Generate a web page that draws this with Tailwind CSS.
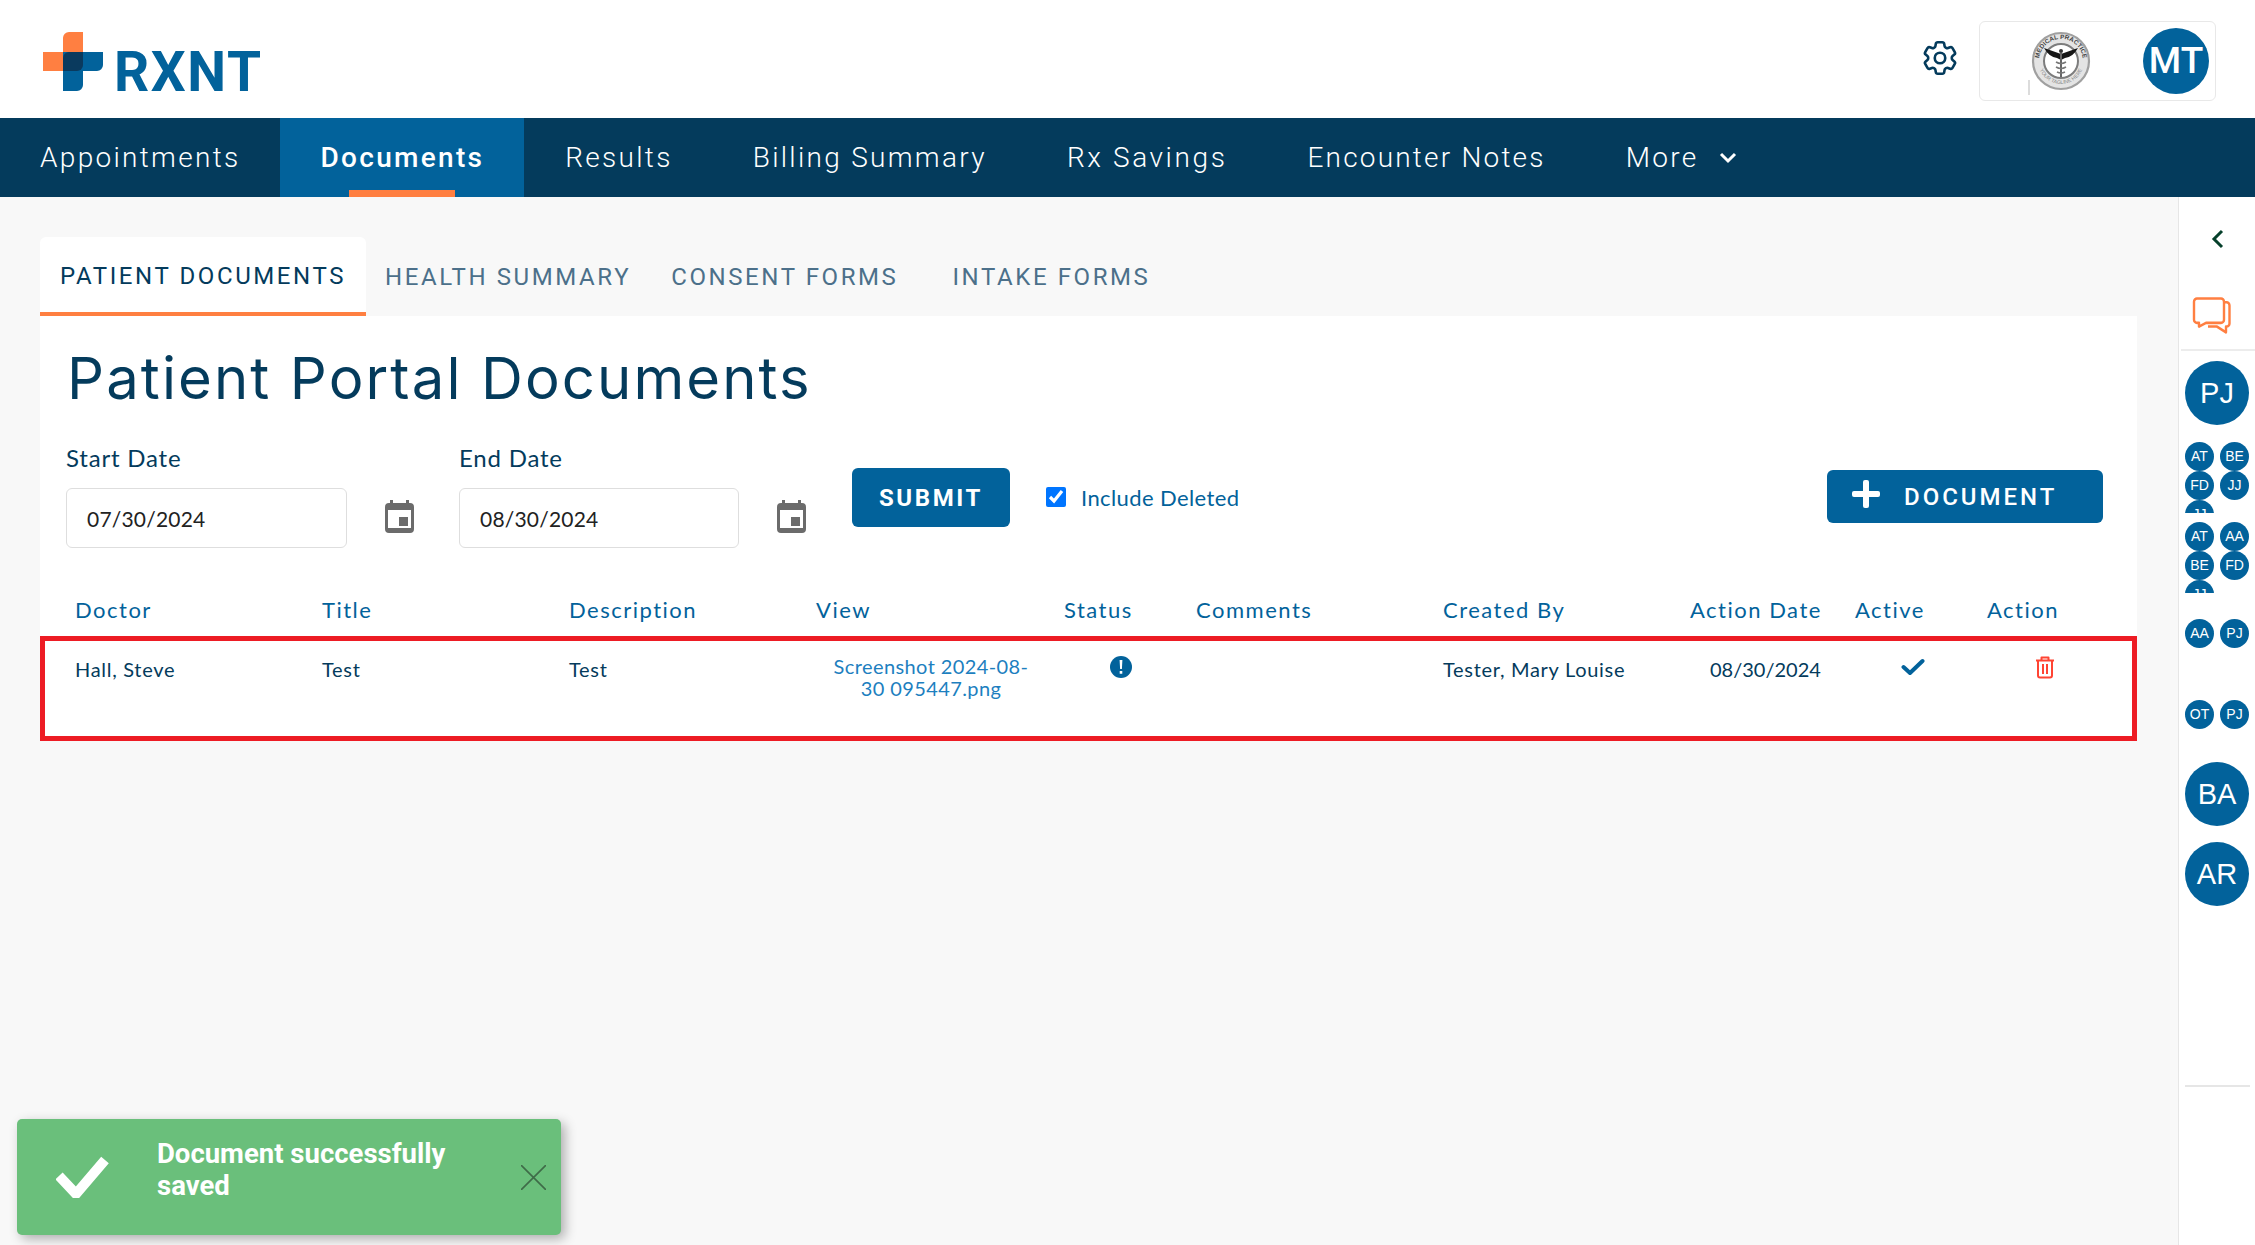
<!DOCTYPE html>
<html lang="en">
<head>
<meta charset="UTF-8">
<title>Documents</title>
<script src="https://cdn.jsdelivr.net/npm/@tailwindcss/browser@4"></script>
</head>
<body class="relative h-[1245px] w-[2255px] overflow-hidden bg-[#f8f8f8] font-['Lato',sans-serif]">

  <!-- top header -->
  <header class="flex h-[118px] items-start justify-between bg-white">
    <div class="ml-[43px] mt-[32px] flex items-start">
      <svg class="h-[59px] w-[60px]" viewBox="0 0 60 59">
        <path d="M20 6a6 6 0 0 1 6-6h14v39H0V20h20z" fill="#ff7f41"/>
        <path d="M20 20h40v13a6 6 0 0 1-6 6H40v14a6 6 0 0 1-6 6H20z" fill="#02629b"/>
        <path d="M20 26a6 6 0 0 1 6-6h14v13a6 6 0 0 1-6 6H20z" fill="#0a3a5e"/>
      </svg>
      <span class="ml-[11px] mt-[11px] font-['Roboto',sans-serif] text-[55px] leading-[59px] font-bold tracking-[1.6px] text-[#02629b]">RXNT</span>
    </div>
    <div class="mr-[39px] mt-[21px] flex items-start">
      <svg class="mr-[18px] mt-[16px] h-[42px] w-[42px]" viewBox="0 0 24 24" fill="none" stroke="#043b5c" stroke-width="1.5" stroke-linejoin="round">
        <path d="M9.594 3.94c.09-.542.56-.94 1.11-.94h2.593c.55 0 1.02.398 1.11.94l.213 1.281c.063.374.313.686.645.87.074.04.147.083.22.127.325.196.72.257 1.075.124l1.217-.456a1.125 1.125 0 0 1 1.37.49l1.296 2.247a1.125 1.125 0 0 1-.26 1.431l-1.003.827c-.293.241-.438.613-.43.992a7.723 7.723 0 0 1 0 .255c-.008.378.137.75.43.991l1.004.827c.424.35.534.955.26 1.43l-1.298 2.247a1.125 1.125 0 0 1-1.369.491l-1.217-.456c-.355-.133-.75-.072-1.076.124a6.47 6.47 0 0 1-.22.128c-.331.183-.581.495-.644.869l-.213 1.281c-.09.543-.56.94-1.11.94h-2.594c-.55 0-1.019-.398-1.11-.94l-.213-1.281c-.062-.374-.312-.686-.644-.87a6.52 6.52 0 0 1-.22-.127c-.325-.196-.72-.257-1.076-.124l-1.217.456a1.125 1.125 0 0 1-1.369-.49l-1.297-2.247a1.125 1.125 0 0 1 .26-1.431l1.004-.827c.292-.24.437-.613.43-.991a6.932 6.932 0 0 1 0-.255c.007-.38-.138-.751-.43-.992l-1.004-.827a1.125 1.125 0 0 1-.26-1.43l1.297-2.247a1.125 1.125 0 0 1 1.37-.491l1.216.456c.356.133.751.072 1.076-.124.072-.044.146-.086.22-.128.332-.183.582-.495.644-.869l.214-1.28Z"/>
        <circle cx="12" cy="12" r="3"/>
      </svg>
      <div class="relative flex h-[80px] w-[237px] items-center justify-between rounded-[6px] border border-[#e8e8e8] bg-white pl-[51px] pr-[6px]">
        <svg class="h-[60px] w-[60px]" viewBox="0 0 60 60">
          <defs>
            <path id="sealtop" d="M8 30a22 22 0 0 1 44 0"/>
            <path id="sealbot" d="M7 30a23 23 0 0 0 46 0"/>
          </defs>
          <circle cx="30" cy="30" r="28" fill="#e4e4e4" stroke="#a0a0a0" stroke-width="2.2"/>
          <circle cx="30" cy="30" r="17" fill="#fff" stroke="#7d7d7d" stroke-width="2"/>
          <text font-family="Liberation Sans, sans-serif" font-size="6.4" font-weight="700" fill="#444" text-anchor="middle"><textPath href="#sealtop" startOffset="50%">MEDICAL PRACTICE</textPath></text>
          <text font-family="Liberation Sans, sans-serif" font-size="5.2" fill="#888" text-anchor="middle"><textPath href="#sealbot" startOffset="50%">YOUR TAGLINE HERE</textPath></text>
          <path d="M30 23 L13 17 Q18 26 26 27 L30 29 L34 27 Q42 26 47 17Z" fill="#161616"/>
          <circle cx="30" cy="20" r="2" fill="#333"/>
          <path d="M29 22h2v24h-2z" fill="#666"/>
          <path d="M25 31q5 3 10 0M25 36q5 3 10 0M26 41q4 2 8 0" fill="none" stroke="#777" stroke-width="1.6"/>
        </svg>
        <div class="flex h-[66px] w-[66px] items-center justify-center rounded-full bg-[#02629b] font-['Roboto',sans-serif] text-[37px] font-medium text-white">MT</div>
        <span class="absolute left-[48px] top-[58px] h-[15px] w-[2px] bg-[#dcdcdc]"></span>
      </div>
    </div>
  </header>

  <!-- main nav -->
  <nav class="flex h-[79px] items-stretch bg-[#043b5c] font-['Roboto',sans-serif] text-[28px] tracking-[2.3px] text-white">
    <a class="flex items-center px-[40px] font-light">Appointments</a>
    <a class="relative flex items-center bg-[#02629b] px-[40px] font-medium">Documents<span class="absolute bottom-0 left-[69px] h-[7px] w-[106px] bg-[#ff7f41]"></span></a>
    <a class="ml-[1px] flex items-center px-[40px] font-light">Results</a>
    <a class="flex items-center px-[40px] font-light">Billing Summary</a>
    <a class="flex items-center px-[40px] font-light tracking-[2.6px]">Rx Savings</a>
    <a class="flex items-center px-[40px] font-light tracking-[2.2px]">Encounter Notes</a>
    <a class="flex items-center gap-[20px] px-[40px] font-light">More
      <svg class="h-[12px] w-[20px]" viewBox="0 0 20 12" fill="none" stroke="#fff" stroke-width="3"><path d="M3 2l7 7 7-7"/></svg>
    </a>
  </nav>

  <div class="flex h-[1048px]">
    <main class="w-[2178px] pl-[40px] pr-[41px] pt-[40px]">
      <!-- sub tabs -->
      <div class="flex h-[79px] font-['Roboto',sans-serif] text-[24px] tracking-[2.6px] text-[#4c708a]">
        <a class="flex w-[326px] items-center justify-center rounded-t-[6px] border-b-[4px] border-[#ff7f41] bg-white pt-[3px] font-normal text-[#043b5c]">PATIENT DOCUMENTS</a>
        <a class="ml-[19px] flex items-center pt-[1px]">HEALTH SUMMARY</a>
        <a class="ml-[40px] flex items-center pt-[1px]">CONSENT FORMS</a>
        <a class="ml-[54px] flex items-center pt-[1px]">INTAKE FORMS</a>
      </div>

      <section class="h-[425px] bg-white">
        <h1 class="pl-[27px] pt-[24px] font-['Inter',sans-serif] text-[58px] leading-[76px] font-normal tracking-[2.1px] text-[#043b5c]">Patient Portal Documents</h1>

        <!-- filters -->
        <div class="relative mt-[26px] flex h-[100px] pl-[26px]">
          <div class="w-[393px]">
            <label class="block text-[24px] leading-[32px] tracking-[0.8px] text-[#043b5c]">Start Date</label>
            <div class="mt-[14px] flex items-center">
              <input class="h-[60px] w-[281px] rounded-[6px] border border-[#dedede] bg-white px-[20px] text-[21px] tracking-[0.2px] text-[#222]" value="07/30/2024">
              <svg class="mb-[3px] ml-[38px] h-[33px] w-[29px]" viewBox="0 0 29 33" fill="#6b6b6b"><path d="M5 0h3v3h13V0h3v3h1a4 4 0 0 1 4 4v22a4 4 0 0 1-4 4H4a4 4 0 0 1-4-4V7a4 4 0 0 1 4-4h1z"/><path d="M3 10h23v18H3z" fill="#fff"/><path d="M14 17h9v9h-9z"/></svg>
            </div>
          </div>
          <div class="w-[393px]">
            <label class="block text-[24px] leading-[32px] tracking-[0.8px] text-[#043b5c]">End Date</label>
            <div class="mt-[14px] flex items-center">
              <input class="h-[60px] w-[280px] rounded-[6px] border border-[#dedede] bg-white px-[20px] text-[21px] tracking-[0.2px] text-[#222]" value="08/30/2024">
              <svg class="mb-[3px] ml-[38px] h-[33px] w-[29px]" viewBox="0 0 29 33" fill="#6b6b6b"><path d="M5 0h3v3h13V0h3v3h1a4 4 0 0 1 4 4v22a4 4 0 0 1-4 4H4a4 4 0 0 1-4-4V7a4 4 0 0 1 4-4h1z"/><path d="M3 10h23v18H3z" fill="#fff"/><path d="M14 17h9v9h-9z"/></svg>
            </div>
          </div>
          <button class="mt-[26px] h-[59px] w-[158px] rounded-[6px] bg-[#02629b] font-['Roboto',sans-serif] text-[24px] font-bold tracking-[2.6px] text-white">SUBMIT</button>
          <label class="ml-[36px] mt-[41px] flex h-[28px] items-center text-[22px] tracking-[0.4px] text-[#02629b]">
            <input type="checkbox" checked class="h-[20px] w-[20px] accent-[#0075ff]">
            <span class="ml-[15px]">Include Deleted</span>
          </label>
          <button class="absolute left-[1787px] top-[28px] flex h-[53px] w-[276px] items-center rounded-[6px] bg-[#02629b] pl-[25px] font-['Roboto',sans-serif] text-[24px] font-medium tracking-[3px] text-white">
            <svg class="mb-[6px] h-[28px] w-[28px]" viewBox="0 0 28 28" fill="#fff"><rect x="11" y="0" width="6" height="28" rx="2"/><rect x="0" y="11" width="28" height="6" rx="2"/></svg>
            <span class="ml-[24px]">DOCUMENT</span>
          </button>
        </div>

        <!-- table -->
        <div class="mt-[43px]">
          <div class="flex h-[51px] items-center pb-[3px] pl-[35px] text-[22px] tracking-[1.5px] text-[#02629b]">
            <span class="w-[247px]">Doctor</span>
            <span class="w-[247px]">Title</span>
            <span class="w-[247px]">Description</span>
            <span class="w-[248px]">View</span>
            <span class="w-[132px]">Status</span>
            <span class="w-[247px]">Comments</span>
            <span class="w-[247px]">Created By</span>
            <span class="w-[165px]">Action Date</span>
            <span class="w-[132px]">Active</span>
            <span>Action</span>
          </div>
          <div class="flex h-[105px] items-start border-[5px] border-[#ed1c24] bg-white pl-[30px] text-[20px] tracking-[0.7px] text-[#043b5c]">
            <span class="mt-[14px] w-[247px] leading-[28px]">Hall, Steve</span>
            <span class="mt-[14px] w-[247px] leading-[28px]">Test</span>
            <span class="mt-[14px] w-[247px] leading-[28px]">Test</span>
            <a class="ml-[10px] mt-[14px] w-[210px] text-center text-[20px] leading-[22px] tracking-[0.4px] text-[#1d7fbf]">Screenshot 2024-08-30 095447.png</a>
            <span class="ml-[28px] w-[132px]">
              <svg class="ml-[46px] mt-[15px] h-[22px] w-[22px]" viewBox="0 0 22 22"><circle cx="11" cy="11" r="11" fill="#02629b"/><path d="M9.6 4h2.8l-.5 9h-1.8zM9.7 15h2.6v2.8H9.7z" fill="#fff"/></svg>
            </span>
            <span class="w-[247px]"></span>
            <span class="mt-[14px] w-[247px] leading-[28px]">Tester, Mary Louise</span>
            <span class="mt-[14px] w-[165px] pl-[20px] leading-[28px] tracking-normal">08/30/2024</span>
            <span class="w-[132px]">
              <svg class="ml-[46px] mt-[17px] h-[18px] w-[24px]" viewBox="0 0 24 18" fill="none" stroke="#02629b" stroke-width="4" stroke-linecap="round" stroke-linejoin="round"><path d="M2.500 9L9 15 21.500 3"/></svg>
            </span>
            <span>
              <svg class="ml-[48px] mt-[15px] h-[23px] w-[20px]" viewBox="0 0 20 23" fill="none" stroke="#ff4433" stroke-width="2" stroke-linejoin="round"><path d="M1 4.500h18M6.500 4.500V1.500h7v3M3 4.500v15a2 2 0 0 0 2 2h10a2 2 0 0 0 2-2v-15M8 8v10M12 8v10"/></svg>
            </span>
          </div>
        </div>
      </section>
    </main>

    <!-- right rail -->
    <aside class="w-[77px] border-l border-[#e6e6e6] bg-white">
      <div class="ml-[2px] flex h-[154px] flex-col border-b-2 border-[#ececec]">
        <svg class="ml-[30px] mt-[32px] h-[20px] w-[14px]" viewBox="0 0 14 20" fill="none" stroke="#06402b" stroke-width="3"><path d="M11 2L3 10l8 8"/></svg>
        <svg class="ml-[11px] mt-[48px] h-[38px] w-[40px]" viewBox="0 0 40 36" preserveAspectRatio="none" fill="none" stroke="#ff7f41" stroke-width="2.4" stroke-linejoin="round"><path d="M5 1.500h24a3 3 0 0 1 3 3v17a3 3 0 0 1-3 3H14l-7 3.500v-3.500H5a3 3 0 0 1-3-3v-17a3 3 0 0 1 3-3z"/><path d="M33 5h1.500a3 3 0 0 1 3 3v17a3 3 0 0 1-3 3H34v5.500L25 28h-9"/></svg>
      </div>
      <div class="flex flex-col pl-[6px] pr-[6px] font-['Liberation_Sans',sans-serif] text-white">
        <div class="mt-[10px] flex h-[64px] w-[64px] items-center justify-center rounded-full bg-[#02629b] pt-[1px] text-[29px]">PJ</div>

        <div class="mt-[17px] grid h-[71px] w-[64px] grid-cols-[29px_29px] justify-between overflow-hidden text-[14px]">
          <div class="flex h-[29px] w-[29px] items-center justify-center rounded-full bg-[#02629b]">AT</div>
          <div class="flex h-[29px] w-[29px] items-center justify-center rounded-full bg-[#02629b]">BE</div>
          <div class="flex h-[29px] w-[29px] items-center justify-center rounded-full bg-[#02629b]">FD</div>
          <div class="flex h-[29px] w-[29px] items-center justify-center rounded-full bg-[#02629b]">JJ</div>
          <div class="flex h-[29px] w-[29px] items-center justify-center rounded-full bg-[#02629b]">JJ</div>
        </div>
        <div class="mt-[9px] grid h-[71px] w-[64px] grid-cols-[29px_29px] justify-between overflow-hidden text-[14px]">
          <div class="flex h-[29px] w-[29px] items-center justify-center rounded-full bg-[#02629b]">AT</div>
          <div class="flex h-[29px] w-[29px] items-center justify-center rounded-full bg-[#02629b]">AA</div>
          <div class="flex h-[29px] w-[29px] items-center justify-center rounded-full bg-[#02629b]">BE</div>
          <div class="flex h-[29px] w-[29px] items-center justify-center rounded-full bg-[#02629b]">FD</div>
          <div class="flex h-[29px] w-[29px] items-center justify-center rounded-full bg-[#02629b]">JJ</div>
        </div>
        <div class="mt-[26px] flex h-[29px] w-[64px] justify-between text-[14px]">
          <div class="flex h-[29px] w-[29px] items-center justify-center rounded-full bg-[#02629b]">AA</div>
          <div class="flex h-[29px] w-[29px] items-center justify-center rounded-full bg-[#02629b]">PJ</div>
        </div>
        <div class="mt-[52px] flex h-[29px] w-[64px] justify-between text-[14px]">
          <div class="flex h-[29px] w-[29px] items-center justify-center rounded-full bg-[#02629b]">OT</div>
          <div class="flex h-[29px] w-[29px] items-center justify-center rounded-full bg-[#02629b]">PJ</div>
        </div>

        <div class="mt-[33px] flex h-[64px] w-[64px] items-center justify-center rounded-full bg-[#02629b] pt-[1px] text-[29px]">BA</div>
        <div class="mt-[16px] flex h-[64px] w-[64px] items-center justify-center rounded-full bg-[#02629b] pt-[1px] text-[29px]">AR</div>
        <div class="mt-[179px] h-[2px] w-[65px] bg-[#e6e6e6]"></div>
      </div>
    </aside>
  </div>

  <!-- toast -->
  <div class="absolute left-[17px] top-[1119px] flex h-[116px] w-[544px] items-center rounded-[5px] bg-[#6abf7b] shadow-[4px_4px_12px_rgba(0,0,0,0.3)]">
    <svg class="ml-[39px] h-[42px] w-[53px]" viewBox="0 0 53 42" fill="none" stroke="#fff" stroke-width="10"><path d="M3 20l17 18L49 4"/></svg>
    <div class="ml-[48px] w-[360px] pb-[14px] font-['Roboto',sans-serif] text-[27.5px] leading-[32px] font-bold text-white">Document successfully saved</div>
    <svg class="ml-[4px] h-[25px] w-[25px]" viewBox="0 0 25 25" fill="none" stroke="#3f6b48" stroke-width="1.6"><path d="M0 0l25 25M25 0L0 25"/></svg>
  </div>
</body>
</html>
